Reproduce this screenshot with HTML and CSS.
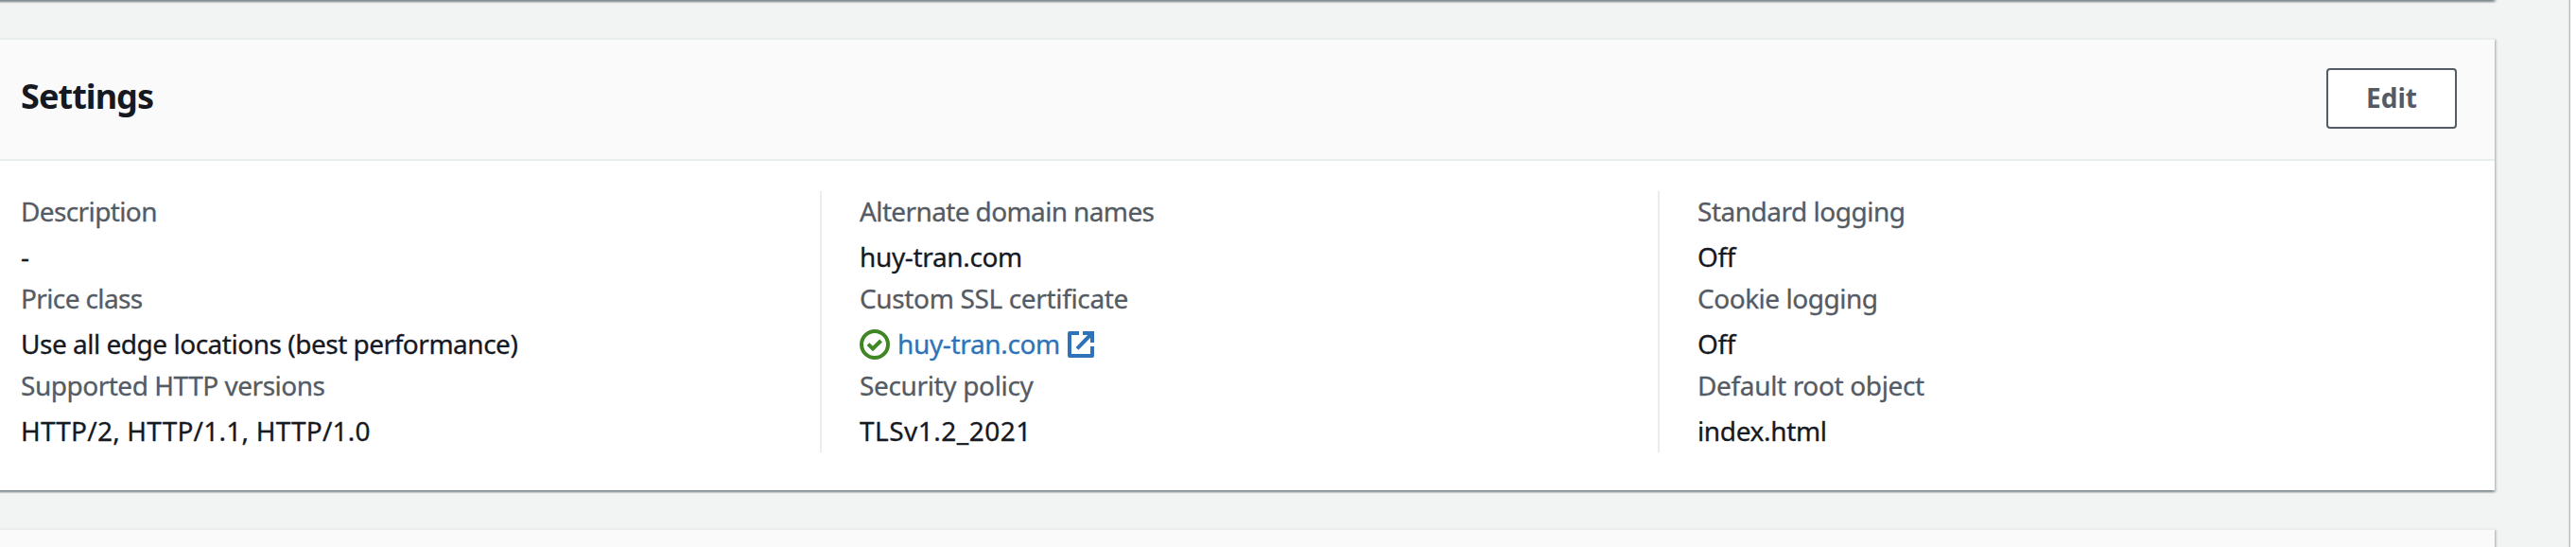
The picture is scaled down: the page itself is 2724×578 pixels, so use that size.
FILE: index.html
```html
<!DOCTYPE html>
<html lang="en">
<head>
<meta charset="utf-8">
<title>Settings</title>
<link rel="stylesheet" href="styles.css">
</head>
<body>
<div class="page">
  <main class="content">
    <section class="card card-previous"></section>
    <section class="card">
      <header class="card-header">
        <h2 class="card-title">Settings</h2>
        <button class="button" type="button">Edit</button>
      </header>
      <div class="columns">
        <dl class="column">
          <dt class="track-tightest">Description</dt>
          <dd>-</dd>
          <dt class="track-tightest">Price class</dt>
          <dd class="track-tight">Use all edge locations (best performance)</dd>
          <dt class="track-tight">Supported HTTP versions</dt>
          <dd class="track-wide">HTTP/2, HTTP/1.1, HTTP/1.0</dd>
        </dl>
        <dl class="column">
          <dt class="track-tightest">Alternate domain names</dt>
          <dd>huy-tran.com</dd>
          <dt>Custom SSL certificate</dt>
          <dd class="status">
            <svg class="icon icon-success" viewBox="0 0 16 16"><circle cx="8" cy="8" r="7"/><path d="M4.5 7.8l2.5 2.4 4.3-4.2"/></svg>
            <a class="link" href="#">huy-tran.com</a>
            <svg class="icon icon-external" viewBox="0 0 16 16"><path d="M7 2H2v12h12V9" stroke-linejoin="round"/><path d="M9 2h5v5M6 10.2l7.5-7.7"/></svg>
          </dd>
          <dt>Security policy</dt>
          <dd class="track-wider">TLSv1.2_2021</dd>
        </dl>
        <dl class="column">
          <dt class="track-tight">Standard logging</dt>
          <dd>Off</dd>
          <dt class="track-tight">Cookie logging</dt>
          <dd>Off</dd>
          <dt>Default root object</dt>
          <dd>index.html</dd>
        </dl>
      </div>
    </section>
    <section class="card card-next"></section>
  </main>
  <aside class="side-panel"></aside>
</div>
</body>
</html>
```
FILE: styles.css
```css
* {
  box-sizing: border-box;
}

body {
  margin: 0;
  background: #f2f3f3;
  color: #16191f;
  font: 28px/42px "Noto Sans", sans-serif;
  overflow: hidden;
}

.page {
  display: flex;
  height: 578px;
  overflow: hidden;
}

.content {
  flex: 1;
  display: flex;
  flex-direction: column;
  gap: 40px;
  padding-right: 80px;
}

.card {
  flex: none;
  margin-left: -20px;
  background: #fff;
  border-top: 2px solid #eaeded;
  box-shadow:
    0 2px 2px 0 rgba(0, 28, 36, .3),
    2px 2px 2px 0 rgba(0, 28, 36, .15),
    -2px 2px 2px 0 rgba(0, 28, 36, .15);
}

.card-previous {
  height: 40px;
  margin-top: -40px;
}

.card-next {
  height: 60px;
  background: #fafafa;
}

.card-header {
  display: flex;
  justify-content: space-between;
  align-items: center;
  height: 128px;
  padding: 0 40px 0 42px;
  background: #fafafa;
  border-bottom: 2px solid #eaeded;
}

.card-title {
  margin: 0 0 6px;
  font-size: 36px;
  font-weight: 700;
  letter-spacing: -.94px;
}

.button {
  width: 138px;
  height: 64px;
  margin-bottom: 2px;
  padding: 0 0 2px;
  border: 2px solid #545b64;
  border-radius: 4px;
  background: #fff;
  color: #545b64;
  font: 700 28px/42px "Noto Sans", sans-serif;
}

.columns {
  display: grid;
  grid-template-columns: 887px 886px 1fr;
  padding: 32px 0 40px;
}

.column {
  margin: 0;
  padding-left: 40px;
  border-left: 2px solid #eaeded;
  letter-spacing: -.35px;
  -webkit-text-stroke: .3px;
}

.column:first-child {
  padding-left: 42px;
  border-left: 0;
}

dt {
  height: 44px;
  margin-bottom: 4px;
  color: #545b64;
}

dd {
  height: 44px;
  margin: 0;
}

.track-tight { letter-spacing: -.48px; }
.track-tightest { letter-spacing: -.62px; }
.track-wide { letter-spacing: .22px; }
.track-wider { letter-spacing: .5px; }

.status {
  display: flex;
  align-items: center;
}

.icon {
  flex: none;
  width: 32px;
  height: 32px;
  fill: none;
  stroke-width: 2;
}

.icon-success {
  margin-right: 8px;
  stroke: #3f8624;
}

.icon-external {
  margin-left: 6px;
  stroke: #2e73b8;
}

.link {
  margin-bottom: 2px;
  color: #2e73b8;
  text-decoration: none;
}

.side-panel {
  width: 6px;
  background: #fff;
  box-shadow: 0 0 2px 1px rgba(0, 28, 36, .35);
}
```
